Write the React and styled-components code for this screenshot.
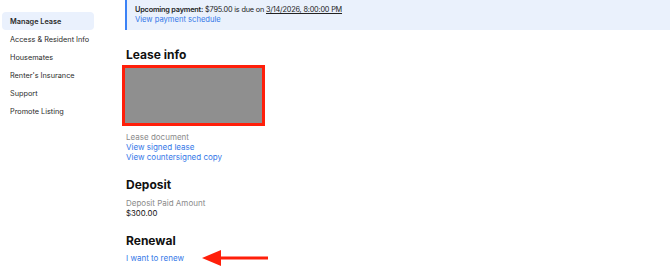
import React from "react";
import styled, { createGlobalStyle } from "styled-components";

const Global = createGlobalStyle`
  html, body { margin: 0; padding: 0; background: #fff; }
  body { font-family: Inter, "Noto Sans", sans-serif; color: #1d1d1f; }
  * { box-sizing: border-box; }
`;

const Page = styled.div`
  display: flex;
  width: 670px;
  height: 271px;
  overflow: hidden;
`;

const Sidebar = styled.nav`
  width: 125px;
  flex-shrink: 0;
  padding: 12px 31px 0 2px;
  display: flex;
  flex-direction: column;
`;

const NavItem = styled.div`
  height: 18px;
  display: flex;
  align-items: center;
  padding-left: 8px;
  font-size: 7.3px;
  border-radius: 4px;
  color: #2b2b2b;
  font-weight: ${(p) => (p.$active ? 600 : 400)};
  background: ${(p) => (p.$active ? "#eaf1fd" : "transparent")};
`;

const Main = styled.main`
  flex: 1;
  display: flex;
  flex-direction: column;
  position: relative;
`;

const Banner = styled.div`
  height: 30px;
  background: #eaf1fc;
  border-left: 2px solid #3b82f6;
  padding: 5px 0 0 8px;
  font-size: 7.3px;
  line-height: 10px;
  color: #222;
`;

const BannerLine = styled.div`
  letter-spacing: -0.18px;
`;

const Strong = styled.span`
  font-weight: 600;
`;

const Underlined = styled.span`
  text-decoration: underline;
`;

const Link = styled.a`
  display: block;
  color: #3478e8;
  text-decoration: none;
  font-size: 8px;
  line-height: 10px;
  margin-top: ${(p) => p.$mt || "0"};
`;

const BannerLink = styled(Link)`
  font-size: 7.6px;
`;

const Content = styled.div`
  padding: 0 0 0 1px;
  display: flex;
  flex-direction: column;
`;

const Heading = styled.h2`
  margin: ${(p) => p.$mt || "0"} 0 0 0;
  font-size: 12px;
  line-height: 16px;
  font-weight: 700;
  color: #111;
`;

const Redacted = styled.div`
  margin: 2px 0 0 -4px;
  width: 143px;
  height: 61px;
  border: 3.5px solid #ff1f0a;
  background: #8f8f8f;
`;

const Label = styled.div`
  font-size: 8px;
  line-height: 10px;
  color: #8a8a8a;
  margin-top: ${(p) => p.$mt || "0"};
`;

const Value = styled.div`
  font-size: 7.8px;
  line-height: 10px;
  color: #111;
`;

const Arrow = styled.svg`
  position: absolute;
  left: 77px;
  top: 248px;
`;

export default function App() {
  return (
    <>
      <Global />
      <Page>
        <Sidebar>
          <NavItem $active>Manage Lease</NavItem>
          <NavItem>Access &amp; Resident Info</NavItem>
          <NavItem>Housemates</NavItem>
          <NavItem>Renter's Insurance</NavItem>
          <NavItem>Support</NavItem>
          <NavItem>Promote Listing</NavItem>
        </Sidebar>
        <Main>
          <Banner>
            <BannerLine>
              <Strong>Upcoming payment:</Strong> $795.00 is due on{" "}
              <Underlined>3/14/2026, 8:00:00 PM</Underlined>
            </BannerLine>
            <BannerLink href="#">View payment schedule</BannerLink>
          </Banner>
          <Content>
            <Heading $mt="17px">Lease info</Heading>
            <Redacted />
            <Label $mt="6px">Lease document</Label>
            <Link href="#">View signed lease</Link>
            <Link href="#">View countersigned copy</Link>
            <Heading $mt="15px">Deposit</Heading>
            <Label $mt="5px">Deposit Paid Amount</Label>
            <Value>$300.00</Value>
            <Heading $mt="15px">Renewal</Heading>
            <Link href="#" $mt="4px">I want to renew</Link>
          </Content>
          <Arrow width="68" height="20" viewBox="0 0 68 20">
            <polygon points="0,10 19,2 19,18" fill="#ff1f0a" />
            <rect x="18" y="8.5" width="48" height="3" fill="#ff1f0a" />
          </Arrow>
        </Main>
      </Page>
    </>
  );
}
